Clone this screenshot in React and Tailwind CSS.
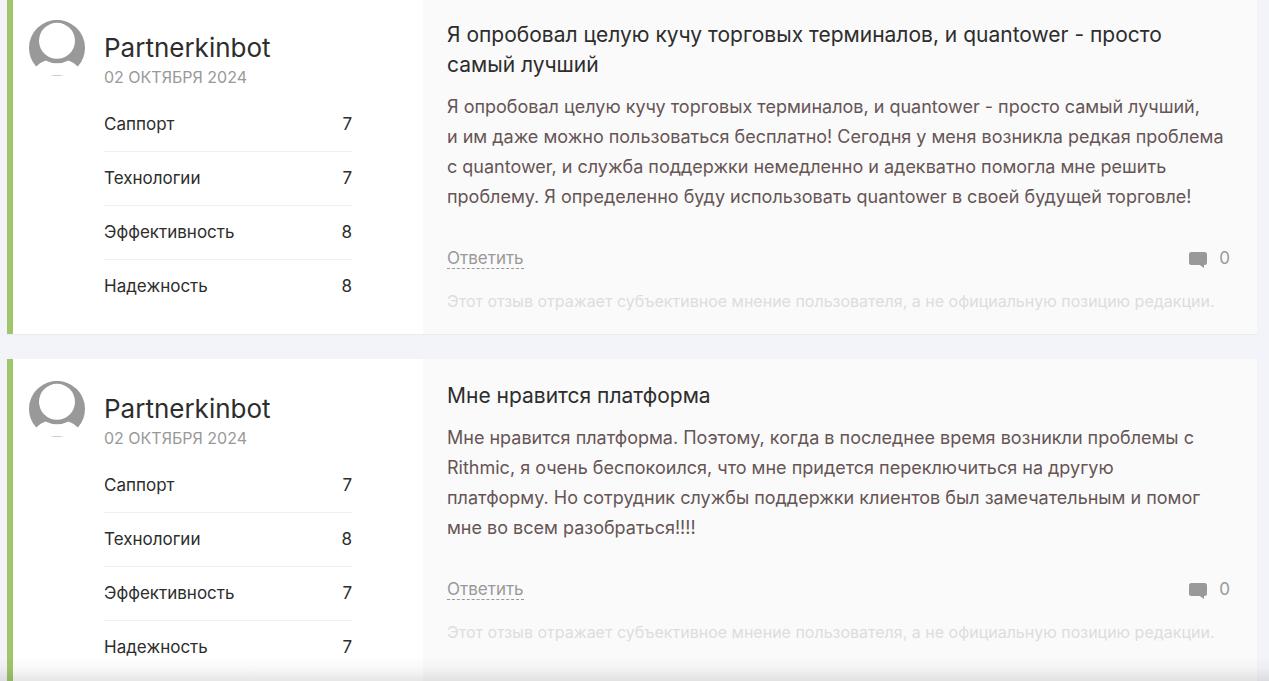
import { Fragment } from "react";

const reviews = [
  {
    id: 1,
    author: "Partnerkinbot",
    date: "02 ОКТЯБРЯ 2024",
    ratings: [["Саппорт", 7], ["Технологии", 7], ["Эффективность", 8], ["Надежность", 8]],
    title: ["Я опробовал целую кучу торговых терминалов, и quantower - просто", "самый лучший"],
    body: [
      "Я опробовал целую кучу торговых терминалов, и quantower - просто самый лучший,",
      "и им даже можно пользоваться бесплатно! Сегодня у меня возникла редкая проблема",
      "с quantower, и служба поддержки немедленно и адекватно помогла мне решить",
      "проблему. Я определенно буду использовать quantower в своей будущей торговле!",
    ],
    comments: 0,
  },
  {
    id: 2,
    author: "Partnerkinbot",
    date: "02 ОКТЯБРЯ 2024",
    ratings: [["Саппорт", 7], ["Технологии", 8], ["Эффективность", 7], ["Надежность", 7]],
    title: ["Мне нравится платформа"],
    body: [
      "Мне нравится платформа. Поэтому, когда в последнее время возникли проблемы с",
      "Rithmic, я очень беспокоился, что мне придется переключиться на другую",
      "платформу. Но сотрудник службы поддержки клиентов был замечательным и помог",
      "мне во всем разобраться!!!!",
    ],
    comments: 0,
  },
];

function Lines({ lines }) {
  return lines.map((line, i) => (
    <Fragment key={line}>
      {i > 0 && <br />}
      {line}
    </Fragment>
  ));
}

function Avatar() {
  return (
    <svg className="size-14 shrink-0" viewBox="0 0 56 56" aria-hidden="true">
      <path
        fill="#999999"
        fillRule="evenodd"
        d="M7.2 46.6A28 28 0 1 1 48.8 46.6Q44.5 42 39.5 40.4Q34 43.2 28 43.2Q22 43.2 16.5 40.4Q11.5 42 7.2 46.6ZM28 2.8A18 18 0 1 0 28 38.8A18 18 0 1 0 28 2.8Z"
      />
      <path fill="#999999" d="M21.500 55.200H34.500Q28 56.500 21.500 55.200Z" />
    </svg>
  );
}

function CommentIcon() {
  return (
    <svg className="mt-1 h-4 w-[18px]" viewBox="0 0 18 16" aria-hidden="true">
      <path fill="#999999" d="M2.500 0H15.500Q18 0 18 2.500V10.500Q18 13 15.500 13H15V16L10.800 13H2.500Q0 13 0 10.500V2.500Q0 0 2.500 0Z" />
    </svg>
  );
}

function Review({ review }) {
  return (
    <article className="flex border-l-6 border-[#9fc66b] bg-white shadow-[0_1px_1px_#e9ecf0]">
      <section className="flex w-[410px] shrink-0 gap-[19px] pt-[22px] pr-[71px] pb-5 pl-4">
        <Avatar />
        <div className="grow">
          <h2 className="pt-3 text-[26px] leading-8 text-[#2d2d2d]">{review.author}</h2>
          <p className="text-base leading-[26px] whitespace-nowrap text-[#999999]">{review.date}</p>
          <dl className="pt-2 text-[17px] text-[#2d2d2d]">
            {review.ratings.map(([label, score]) => (
              <div key={label} className="flex h-[54px] items-center justify-between border-b border-[#f0f0f0] last:border-b-0">
                <dt>{label}</dt>
                <dd>{score}</dd>
              </div>
            ))}
          </dl>
        </div>
      </section>
      <section className="min-w-0 grow bg-[#fafafa] pt-[22px] pr-[27px] pb-3 pl-6">
        <h3 className="text-[21px] leading-[30px] whitespace-nowrap text-[#2d2d2d]">
          <Lines lines={review.title} />
        </h3>
        <p className="pt-3 text-lg leading-[30px] whitespace-nowrap text-[#665555]">
          <Lines lines={review.body} />
        </p>
        <div className="flex items-center justify-between pt-[34px] text-[17px] leading-6 text-[#999999]">
          <button type="button" className="border-b border-dashed border-[#999999] leading-5">Ответить</button>
          <span className="flex items-center gap-3">
            <CommentIcon />
            {review.comments}
          </span>
        </div>
        <p className="pt-[19px] text-base leading-6 whitespace-nowrap text-[#dddddd]">
          Этот отзыв отражает субъективное мнение пользователя, а не официальную позицию редакции.
        </p>
      </section>
    </article>
  );
}

export default function App() {
  return (
    <main className="relative h-screen overflow-hidden bg-[#f3f4f9] font-['Inter','Liberation_Sans',sans-serif]">
      <div className="-mt-0.5 flex flex-col gap-[25px] pr-3 pl-[7px]">
        {reviews.map((review) => (
          <Review key={review.id} review={review} />
        ))}
      </div>
      <div className="pointer-events-none absolute inset-x-0 bottom-0 h-6 bg-linear-to-t from-black/10 via-black/3 to-transparent" />
    </main>
  );
}
